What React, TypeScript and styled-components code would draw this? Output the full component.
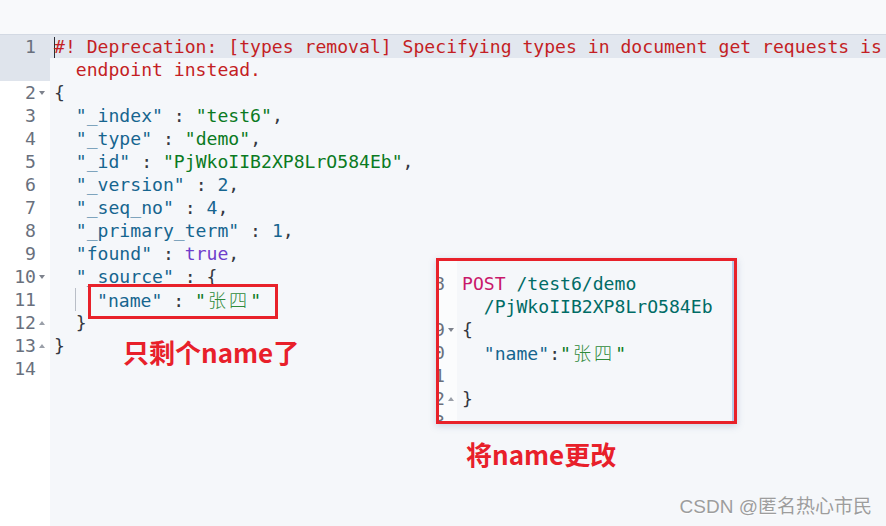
import React from "react"
import styled, { createGlobalStyle } from "styled-components"

const GlobalStyle = createGlobalStyle`
  html, body {
    margin: 0;
    padding: 0;
    background: #f5f7fa;
  }
  * {
    box-sizing: border-box;
  }
`

type Tok = [kind: keyof typeof colors, text: string]

const colors = {
  p: "#343741",
  key: "#16658f",
  str: "#0a7a22",
  num: "#16658f",
  bool: "#6f3ecb",
  warn: "#c41e24",
  method: "#c9186a",
  url: "#006c66",
  han: "#2f8a3a",
}

type Line = {
  n: number
  fold?: "down" | "up"
  guide?: boolean
  toks: Tok[]
}

const lines: Line[] = [
  { n: 2, fold: "down", toks: [["p", "{"]] },
  { n: 3, toks: [["p", "  "], ["key", '"_index"'], ["p", " : "], ["str", '"test6"'], ["p", ","]] },
  { n: 4, toks: [["p", "  "], ["key", '"_type"'], ["p", " : "], ["str", '"demo"'], ["p", ","]] },
  { n: 5, toks: [["p", "  "], ["key", '"_id"'], ["p", " : "], ["str", '"PjWkoIIB2XP8LrO584Eb"'], ["p", ","]] },
  { n: 6, toks: [["p", "  "], ["key", '"_version"'], ["p", " : "], ["num", "2"], ["p", ","]] },
  { n: 7, toks: [["p", "  "], ["key", '"_seq_no"'], ["p", " : "], ["num", "4"], ["p", ","]] },
  { n: 8, toks: [["p", "  "], ["key", '"_primary_term"'], ["p", " : "], ["num", "1"], ["p", ","]] },
  { n: 9, toks: [["p", "  "], ["key", '"found"'], ["p", " : "], ["bool", "true"], ["p", ","]] },
  { n: 10, fold: "down", toks: [["p", "  "], ["key", '"_source"'], ["p", " : {"]] },
  { n: 11, guide: true, toks: [["key", '"name"'], ["p", " : "], ["str", '"'], ["han", "张四"], ["str", '"']] },
  { n: 12, fold: "up", toks: [["p", "  }"]] },
  { n: 13, fold: "up", toks: [["p", "}"]] },
  { n: 14, toks: [] },
]

const requestRows: { n: number; fold?: "down" | "up"; toks: Tok[] }[] = [
  { n: 18, toks: [["method", "POST"], ["url", " /test6/demo"]] },
  { n: 0, toks: [["url", "  /PjWkoIIB2XP8LrO584Eb"]] },
  { n: 19, fold: "down", toks: [["p", "{"]] },
  { n: 20, toks: [["p", "  "], ["key", '"name"'], ["p", ":"], ["str", '"'], ["han", "张四"], ["str", '"']] },
  { n: 21, toks: [] },
  { n: 22, fold: "up", toks: [["p", "}"]] },
  { n: 23, toks: [] },
]

const mono = `"DejaVu Sans Mono", "Liberation Mono", "Noto Sans CJK SC", monospace`

const Page = styled.div`
  position: relative;
  width: 100%;
  height: 100vh;
  overflow: hidden;
  display: flex;
  flex-direction: column;
  font-family: ${mono};
  font-size: 18.1px;
`

const TopBar = styled.div`
  height: 35px;
  flex-shrink: 0;
  background: #f8f9fb;
  border-bottom: 1px solid #d3d9e3;
`

const Editor = styled.div`
  flex: 1;
  display: flex;
  min-height: 0;
`

const Gutter = styled.div<{ $width: number; $bg: string }>`
  width: ${(p) => p.$width}px;
  flex-shrink: 0;
  background: ${(p) => p.$bg};
  overflow: hidden;
`

const GutterCell = styled.div<{ $rows?: number; $active?: boolean; $pad: number }>`
  height: ${(p) => (p.$rows ?? 1) * 23}px;
  display: flex;
  justify-content: flex-end;
  align-items: flex-start;
  line-height: 23px;
  padding-right: ${(p) => p.$pad}px;
  color: #69707d;
  white-space: nowrap;
  background: ${(p) => (p.$active ? "#dfe4ec" : "transparent")};
`

const FoldSlot = styled.span`
  width: 11px;
  height: 23px;
  flex-shrink: 0;
  display: flex;
  align-items: center;
  justify-content: center;
`

const FoldMark = styled.span<{ $dir: "down" | "up" }>`
  width: 0;
  height: 0;
  border-left: 3px solid transparent;
  border-right: 3px solid transparent;
  ${(p) =>
    p.$dir === "down"
      ? "border-top: 4px solid #7d828c;"
      : "border-bottom: 4px solid #9a9fa8;"}
`

const Code = styled.div`
  flex: 1;
  min-width: 0;
  background: #f5f7fa;
  padding-left: 4px;
  overflow: hidden;
`

const Row = styled.div<{ $active?: boolean }>`
  position: relative;
  height: 23px;
  line-height: 23px;
  white-space: pre;
  overflow: hidden;
  color: #343741;
  background: ${(p) => (p.$active ? "#e2e7ef" : "transparent")};
  margin-left: ${(p) => (p.$active ? "-4px" : "0")};
  padding-left: ${(p) => (p.$active ? "4px" : "0")};
`

const Caret = styled.span`
  display: inline-block;
  width: 1px;
  height: 21px;
  margin-right: -1px;
  vertical-align: -5px;
  background: #2b2e35;
`

const Guide = styled.span`
  display: inline-block;
  width: 22px;
  height: 23px;
  vertical-align: top;
  border-left: 1px solid #b9bec7;
  margin-left: 21px;
`

const Span = styled.span<{ $c: string }>`
  color: ${(p) => p.$c};
`

const Han = styled.span`
  color: ${colors.han};
  font-family: "Noto Sans CJK SC", sans-serif;
  font-weight: 300;
  letter-spacing: 3px;
  margin-left: 2px;
`

const Box = styled.div`
  position: absolute;
  border: 3px solid #e8212a;
`

const RequestPanel = styled(Box)`
  left: 436px;
  top: 258px;
  width: 301px;
  height: 166px;
  display: flex;
  overflow: hidden;
  box-shadow: 0 2px 7px rgba(90, 120, 170, 0.28);
`

const RequestCode = styled(Code)`
  padding-left: 5px;
  padding-top: 11px;
  border-right: 2px solid #b4cbe8;
`

const RequestGutter = styled(Gutter)`
  padding-top: 11px;
`

const Caption = styled.div<{ $x: number; $y: number }>`
  position: absolute;
  left: ${(p) => p.$x}px;
  top: ${(p) => p.$y}px;
  font-family: "Noto Sans CJK SC", "Liberation Sans", sans-serif;
  font-weight: 700;
  font-size: 26px;
  line-height: 30px;
  color: #e8202a;
  white-space: nowrap;
`

const Watermark = styled.div`
  position: absolute;
  right: 14px;
  bottom: 8px;
  font-family: "Liberation Sans", "Noto Sans CJK SC", sans-serif;
  font-size: 19px;
  line-height: 22px;
  color: #9d9d9d;
  text-shadow: 0 1px 1px rgba(255, 255, 255, 0.8);
`

const renderToks = (toks: Tok[]) =>
  toks.map(([k, t], i) =>
    k === "han" ? <Han key={i}>{t}</Han> : <Span key={i} $c={colors[k]}>{t}</Span>
  )

export default function App() {
  return (
    <Page>
      <GlobalStyle />
      <TopBar />
      <Editor>
        <Gutter $width={50} $bg="#ffffff">
          <GutterCell $rows={2} $active $pad={3}>
            1<FoldSlot />
          </GutterCell>
          {lines.map((l) => (
            <GutterCell key={l.n} $pad={3}>
              {l.n}
              <FoldSlot>{l.fold && <FoldMark $dir={l.fold} />}</FoldSlot>
            </GutterCell>
          ))}
        </Gutter>
        <Code>
          <Row $active>
            <Caret />
            <Span $c={colors.warn}>
              #! Deprecation: [types removal] Specifying types in document get requests is deprecated, use the
            </Span>
          </Row>
          <Row>
            <Span $c={colors.warn}>  endpoint instead.</Span>
          </Row>
          {lines.map((l) => (
            <Row key={l.n}>
              {l.guide && <Guide />}
              {renderToks(l.toks)}
            </Row>
          ))}
        </Code>
      </Editor>

      <Box style={{ left: 88, top: 284, width: 190, height: 35 }} />
      <Caption $x={123} $y={337}>只剩个name了</Caption>

      <RequestPanel>
        <RequestGutter $width={18} $bg="#fbfcfd">
          {requestRows.map((r, i) => (
            <GutterCell key={i} $pad={1}>
              {r.n ? String(r.n) : ""}
              <FoldSlot>{r.fold && <FoldMark $dir={r.fold} />}</FoldSlot>
            </GutterCell>
          ))}
        </RequestGutter>
        <RequestCode>
          {requestRows.map((r, i) => (
            <Row key={i}>{renderToks(r.toks)}</Row>
          ))}
        </RequestCode>
      </RequestPanel>
      <Caption $x={466} $y={439}>将name更改</Caption>

      <Watermark>CSDN @匿名热心市民</Watermark>
    </Page>
  )
}
